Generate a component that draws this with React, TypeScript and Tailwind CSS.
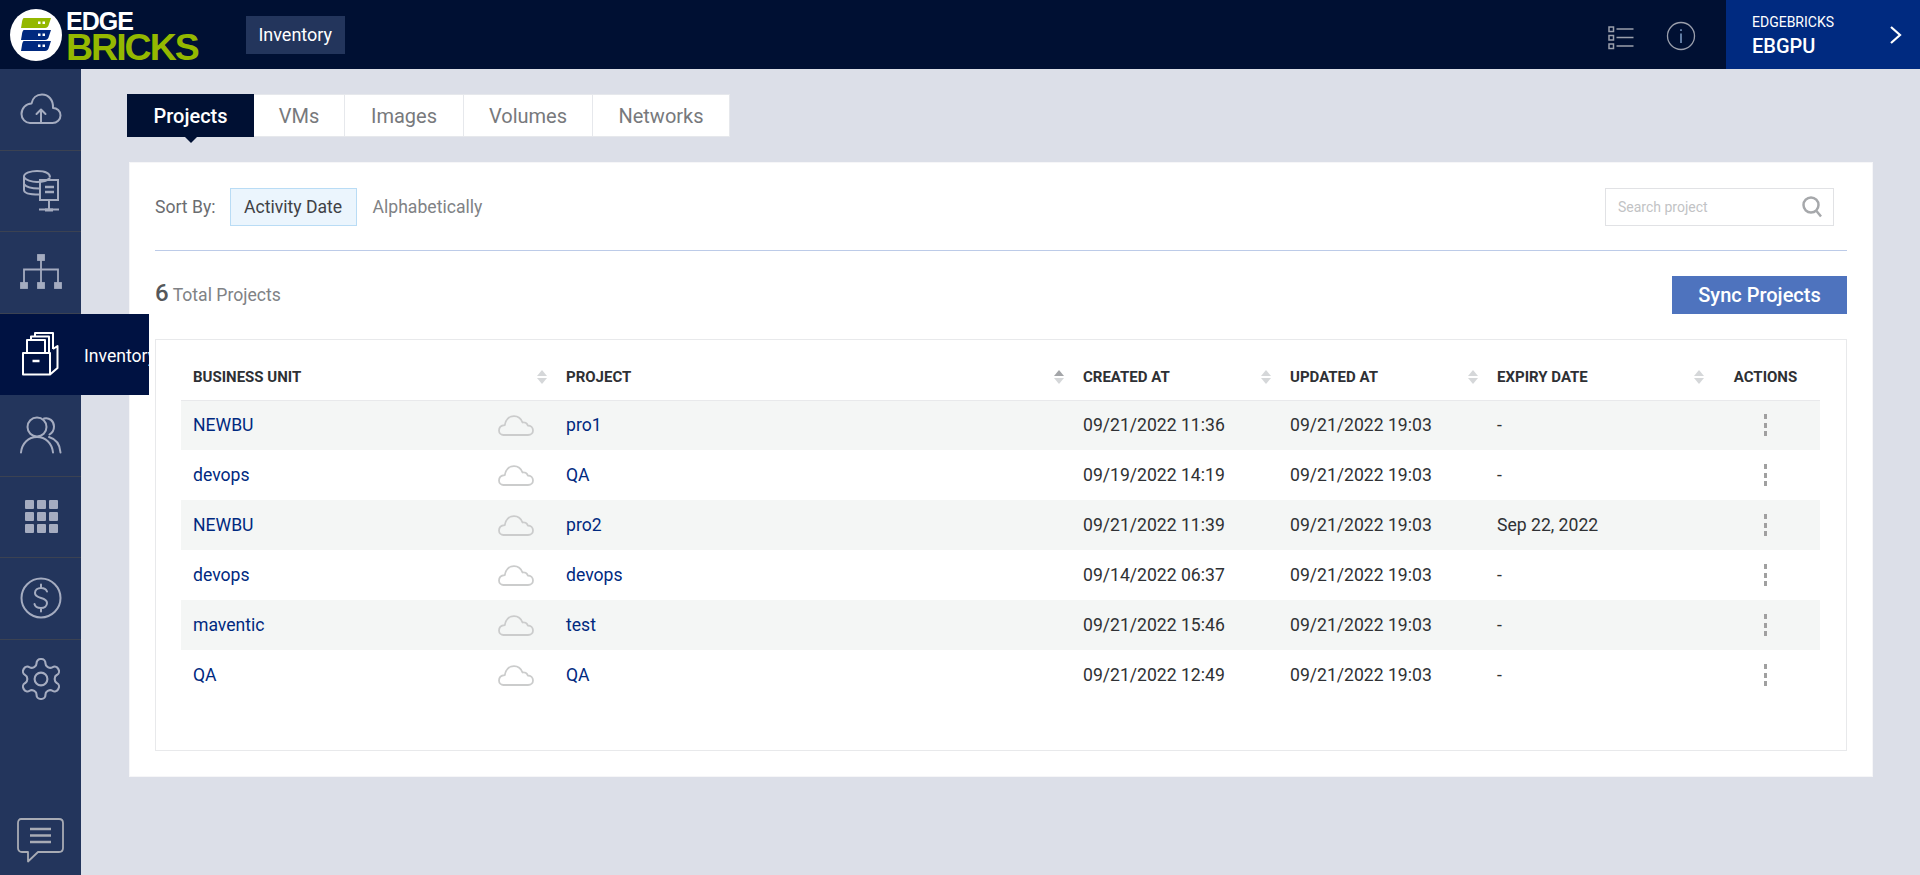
import React from "react";

const Stroke = "#a5acc0";

function CloudUp() {
  return (
    <svg width="42" height="32" viewBox="0 0 42 32" fill="none" stroke={Stroke} strokeWidth="2" strokeLinecap="round" strokeLinejoin="round">
      <path d="M10 30H32.500C37 30 40.500 26.500 40.500 22.500C40.500 18 37 15 33 15C33.500 7 28.500 1.500 22 1.500C16.500 1.500 12.500 5 11.500 10.500C6 10.500 1.500 15.500 1.500 21C1.500 26 5.500 30 10 30Z" />
      <path d="M21 30V17M16.500 21L21 16.500L25.500 21" />
    </svg>
  );
}
function ServerDoc() {
  return (
    <svg width="36" height="42" viewBox="0 0 36 42" fill="none" stroke={Stroke} strokeWidth="2">
      <path d="M16 24.500C7 24.500 1 23 1 20V6.500C1 3 8 1 14 1C21 1 27 3 27 7.500" />
      <path d="M1 7C2 10 9 12 14 12C19 12 24 11 27 8" />
      <path d="M1 14C3 17 9 18.500 16 18.500" />
      <rect x="17" y="10" width="18" height="20" />
      <path d="M22 17H31M22 22H31" strokeWidth="2.500" />
      <path d="M26 30V39M16 39.500H36" />
      <path d="M22 40H30" strokeWidth="3" />
    </svg>
  );
}
function Hierarchy() {
  return (
    <svg width="42" height="36" viewBox="0 0 42 36" fill="none" stroke={Stroke} strokeWidth="1.800">
      <rect x="18" y="1" width="6" height="5" fill="#a5acc0" />
      <path d="M21 6V29M4 29V15.500H38V29" />
      <rect x="1" y="29" width="6" height="5" fill="#a5acc0" />
      <rect x="18" y="29" width="6" height="5" fill="#a5acc0" />
      <rect x="35" y="29" width="6" height="5" fill="#a5acc0" />
    </svg>
  );
}
function InventoryBox() {
  return (
    <svg width="37" height="44" viewBox="0 0 37 44" fill="none" stroke="#fff" strokeWidth="2" strokeLinejoin="round">
      <path d="M1 21V42.500H28V21H1Z" />
      <path d="M28 42.500L35.500 36V14L31 17" />
      <path d="M5 21V8H23V21" />
      <path d="M9 8V4.500H27V21" />
      <path d="M13 4.500V1H31V17" />
      <path d="M10.500 29H17.500" strokeWidth="2.500" />
    </svg>
  );
}
function Users() {
  return (
    <svg width="42" height="38" viewBox="0 0 42 38" fill="none" stroke={Stroke} strokeWidth="2" strokeLinecap="round">
      <circle cx="17" cy="11" r="9.500" />
      <path d="M1 36.500C2 27 8.500 21 17 21C25.500 21 32 27 33 36.500" />
      <path d="M24 2.500C29 1 34 5 34 10.500C34 14 32 17 29.500 18.500" />
      <path d="M29 21C36 23 40 29 40.500 36.500" />
    </svg>
  );
}
function Grid3() {
  return (
    <div className="grid w-[34px] translate-x-[1px] grid-cols-3 gap-[3px]">
      {Array.from({ length: 9 }).map((_, i) => (
        <div key={i} className="h-[9px] w-[9px] rounded-[1px] bg-[#a5acc0]" />
      ))}
    </div>
  );
}
function Dollar() {
  return (
    <svg width="42" height="42" viewBox="0 0 42 42" fill="none" stroke={Stroke} strokeWidth="2" strokeLinecap="round">
      <circle cx="21" cy="21" r="19.500" />
      <path d="M27 14.500C26 12 24 11 21 11C17.500 11 15 13 15 16C15 19 17.500 20 21 21C24.500 22 27 23.500 27 26C27 29 24.500 31 21 31C17.500 31 15 29.500 14.500 27M21 7.500V11M21 31V34.500" />
    </svg>
  );
}
function Gear() {
  return (
    <svg width="48" height="48" viewBox="0 0 24 24" fill="none" stroke={Stroke} strokeWidth="1.050" strokeLinejoin="round" className="-translate-y-[1px]">
      <path d="M12.220 2h-.44a2 2 0 0 0-2 2v.18a2 2 0 0 1-1 1.730l-.43.250a2 2 0 0 1-2 0l-.150-.080a2 2 0 0 0-2.730.730l-.220.380a2 2 0 0 0 .730 2.730l.150.100a2 2 0 0 1 1 1.720v.51a2 2 0 0 1-1 1.740l-.150.090a2 2 0 0 0-.730 2.730l.220.380a2 2 0 0 0 2.730.730l.150-.080a2 2 0 0 1 2 0l.430.250a2 2 0 0 1 1 1.730V20a2 2 0 0 0 2 2h.44a2 2 0 0 0 2-2v-.18a2 2 0 0 1 1-1.730l.430-.250a2 2 0 0 1 2 0l.150.080a2 2 0 0 0 2.730-.730l.220-.390a2 2 0 0 0-.730-2.730l-.150-.080a2 2 0 0 1-1-1.740v-.5a2 2 0 0 1 1-1.740l.150-.090a2 2 0 0 0 .730-2.730l-.220-.380a2 2 0 0 0-2.730-.730l-.150.080a2 2 0 0 1-2 0l-.430-.250a2 2 0 0 1-1-1.730V4a2 2 0 0 0-2-2z" />
      <circle cx="12" cy="12" r="3.200" />
    </svg>
  );
}
function Chat() {
  return (
    <svg width="47" height="45" viewBox="0 0 47 45" fill="none" stroke="#a8abb4" strokeWidth="1.800" strokeLinejoin="round">
      <path d="M4 1H42C44.500 1 46 2.500 46 5V30C46 32.500 44.500 34 42 34H21L11 43.500V34H5C2.500 34 1 32.500 1 30V5C1 2.500 2.500 1 4 1Z" />
      <path d="M13 11H34M13 17.500H34M13 24H34" strokeWidth="2.600" />
    </svg>
  );
}
function Cloud() {
  return (
    <svg width="36" height="21" viewBox="0 0 36 21" fill="none" stroke="#cbcccc" strokeWidth="1.800" strokeLinejoin="round">
      <path d="M5.500 20H30C33 20 35 18 35 15.500C35 12.500 32.800 10.500 29.800 10.500C29 8 26.500 6.800 24.500 7.500C23 3.500 20 1.200 16 1.200C11 1.200 7.500 5 6.800 10.200C3.500 10.500 1 12.500 1 15.500C1 18 3 20 5.500 20Z" />
    </svg>
  );
}
function SortArrows({ active = false }: { active?: boolean }) {
  return (
    <span className="flex flex-col items-center gap-[2px]">
      <span className={`h-0 w-0 border-x-[5.500px] border-b-[6px] border-x-transparent ${active ? "border-b-[#a3a5a8]" : "border-b-[#d5d7d9]"}`} />
      <span className="h-0 w-0 border-x-[5.500px] border-t-[6px] border-x-transparent border-t-[#d5d7d9]" />
    </span>
  );
}
function Kebab() {
  return (
    <div className="flex flex-col items-center gap-[3.500px]">
      <span className="h-[5px] w-[3.500px] bg-[#a0a0a0]" />
      <span className="h-[5px] w-[3.500px] bg-[#a0a0a0]" />
      <span className="h-[5px] w-[3.500px] bg-[#a0a0a0]" />
    </div>
  );
}
function Logo() {
  return (
    <div className="flex items-center">
      <div className="ml-[10px] flex h-[52px] w-[52px] flex-col items-center justify-center gap-[1.500px] rounded-full bg-white">
        {["#94b800", "#00297f", "#00297f"].map((c, i) => (
          <svg key={i} width="30" height="10" viewBox="0 0 30 10">
            <path d="M3 0H30L28 6C27.500 8.500 26 10 24 10H0L1 4C1.300 2 2 0 3 0Z" fill={c} />
            <rect x="17" y="3.500" width="2.500" height="2.500" fill="#fff" />
            <rect x="21.500" y="3.500" width="2.500" height="2.500" fill="#fff" />
          </svg>
        ))}
      </div>
      <div className="ml-[4px] flex flex-col font-['Liberation_Sans',sans-serif] font-bold">
        <span className="mt-[4px] h-[22px] text-[25px] leading-[22px] tracking-[-1px] text-white">EDGE</span>
        <span className="h-[31px] text-[37.500px] leading-[31px] tracking-[-2px] text-[#94b800]">BRICKS</span>
      </div>
    </div>
  );
}

const navIcons = [
  <CloudUp />,
  <ServerDoc />,
  <Hierarchy />,
  <InventoryBox />,
  <Users />,
  <Grid3 />,
  <Dollar />,
  <Gear />,
];

const rows = [
  ["NEWBU", "pro1", "09/21/2022 11:36", "09/21/2022 19:03", "-"],
  ["devops", "QA", "09/19/2022 14:19", "09/21/2022 19:03", "-"],
  ["NEWBU", "pro2", "09/21/2022 11:39", "09/21/2022 19:03", "Sep 22, 2022"],
  ["devops", "devops", "09/14/2022 06:37", "09/21/2022 19:03", "-"],
  ["maventic", "test", "09/21/2022 15:46", "09/21/2022 19:03", "-"],
  ["QA", "QA", "09/21/2022 12:49", "09/21/2022 19:03", "-"],
];

const tabs = [
  ["Projects", "w-[127px]"],
  ["VMs", "w-[91px]"],
  ["Images", "w-[119px]"],
  ["Volumes", "w-[129px]"],
  ["Networks", "w-[137px]"],
];

function Th({ label, active = false, colSpan }: { label: string; active?: boolean; colSpan?: number }) {
  return (
    <th colSpan={colSpan} className="px-0 pt-[14px] text-left align-middle font-normal">
      <div className="flex items-center justify-between pl-[12px] pr-[7px]">
        <span className="text-[15px] font-bold text-[#2e3034]">{label}</span>
        <SortArrows active={active} />
      </div>
    </th>
  );
}

export default function App() {
  return (
    <div className="flex h-screen min-h-[875px] flex-col overflow-hidden bg-[#dcdfe8] font-['Roboto',sans-serif]">
      <header className="flex h-[69px] shrink-0 items-center bg-[#001033]">
        <Logo />
        <div className="ml-[48px] flex h-[38px] w-[99px] items-center justify-center bg-[#23355c] text-[18px] text-white">Inventory</div>
        <div className="ml-auto flex h-full items-center">
          <svg width="26" height="26" viewBox="0 0 26 26" fill="none" stroke="#9a9fac" strokeWidth="1.500" className="mr-[32px] mt-[6px]">
            <rect x="1" y="2" width="4.500" height="4.500" />
            <rect x="1" y="10.500" width="4.500" height="4.500" />
            <rect x="1" y="19" width="4.500" height="4.500" />
            <path d="M8.500 4H25.500M8.500 12.500H25.500M8.500 21H25.500" />
          </svg>
          <svg width="30" height="30" viewBox="0 0 30 30" fill="none" stroke="#9a9fac" strokeWidth="1.300" className="mr-[30px] mt-[3px]">
            <circle cx="15" cy="15" r="13.500" />
            <path d="M15 12.500V22" stroke="#7f9fc9" strokeWidth="1.500" />
            <path d="M15 8.200V10" stroke="#7f9fc9" strokeWidth="1.500" />
          </svg>
          <div className="flex h-full w-[194px] items-center justify-between bg-[#002a80] pl-[26px] pr-[18px] text-white">
            <div className="mt-[3px] flex flex-col">
              <span className="text-[14px] leading-[17px]">EDGEBRICKS</span>
              <span className="mt-[3px] text-[20px] font-medium leading-[24px]">EBGPU</span>
            </div>
            <svg width="13" height="20" viewBox="0 0 13 20" fill="none" stroke="#fff" strokeWidth="2.200">
              <path d="M2 2L11 10L2 18" />
            </svg>
          </div>
        </div>
      </header>

      <div className="flex min-h-0 flex-1">
        <aside className="relative z-10 flex w-[81px] shrink-0 flex-col bg-[#23355c]">
          {navIcons.map((ic, i) => (
            <div
              key={i}
              className={`relative flex h-[81.500px] shrink-0 items-center justify-center ${i === 3 ? "bg-[#001242]" : i === 7 ? "" : "border-b border-[#3b4252]"}`}
            >
              {ic}
              {i === 3 && (
                <div className="absolute left-[81px] top-0 flex h-full w-[68px] items-center overflow-hidden whitespace-nowrap bg-[#001242] pl-[3px] pt-[3px] text-[17.600px] text-white">
                  Inventory
                </div>
              )}
            </div>
          ))}
          <div className="mt-auto flex justify-center pb-[12px] pr-[1px]">
            <Chat />
          </div>
        </aside>

        <main className="min-w-0 flex-1 pl-[46px] pr-[47px] pt-[25px]">
          <nav className="relative flex h-[43px] bg-transparent">
            {tabs.map(([t, w], i) => (
              <div
                key={t}
                className={`relative flex ${w} items-center justify-center text-[20px] ${
                  i === 0 ? "bg-[#001033] font-medium text-white" : "border-y border-r border-[#e6e8ec] bg-white text-[#77797c]"
                }`}
              >
                {t}
                {i === 0 && (
                  <span className="absolute left-1/2 top-full h-0 w-0 -translate-x-1/2 border-x-[6px] border-t-[6px] border-x-transparent border-t-[#001033]" />
                )}
              </div>
            ))}
          </nav>

          <section className="ml-[2px] mt-[25px] h-[615px] border border-[#f6f6f8] bg-white px-[25px] pt-[25px]">
            <div className="flex h-[38px] items-center">
              <span className="text-[17.600px] text-[#6b6d70]">Sort By:</span>
              <span className="ml-[14px] flex h-[38px] w-[127px] items-center justify-center border border-[#b9dcf5] bg-[#ebf5fd] text-[17.600px] text-[#3f4145]">
                Activity Date
              </span>
              <span className="ml-[16px] text-[17.600px] text-[#808285]">Alphabetically</span>
              <div className="ml-auto mr-[13px] flex h-[38px] w-[229px] items-center justify-between border border-[#e1e2e5] pl-[12px] pr-[10px]">
                <span className="text-[14px] text-[#c2c3c5]">Search project</span>
                <svg width="22" height="24" viewBox="0 0 22 24" fill="none" stroke="#a6a8ab" strokeWidth="2.500">
                  <circle cx="10" cy="10" r="7.500" />
                  <path d="M15.500 16L20 21.500" />
                </svg>
              </div>
            </div>
            <div className="mt-[24px] border-t border-[#bccbe8]" />
            <div className="mt-[25px] flex h-[38px] items-center justify-between">
              <div className="-mt-[4px] flex items-baseline">
                <span className="text-[24px] font-medium text-[#55575a]">6</span>
                <span className="ml-[4px] text-[17.600px] text-[#808285]">Total Projects</span>
              </div>
              <button className="flex h-[38px] w-[175px] items-center justify-center bg-[#4e73be] text-[20px] font-medium text-white">
                Sync Projects
              </button>
            </div>
            <div className="mt-[25px] h-[412px] border border-[#e8e9eb] pl-[25px] pr-[26px]">
              <table className="w-full table-fixed border-collapse">
                <colgroup>
                  <col className="w-[317px]" />
                  <col className="w-[56px]" />
                  <col className="w-[517px]" />
                  <col className="w-[207px]" />
                  <col className="w-[207px]" />
                  <col className="w-[226px]" />
                  <col />
                </colgroup>
                <thead>
                  <tr className="h-[60px] border-b border-[#e8e9eb]">
                    <Th label="BUSINESS UNIT" colSpan={2} />
                    <Th label="PROJECT" active />
                    <Th label="CREATED AT" />
                    <Th label="UPDATED AT" />
                    <Th label="EXPIRY DATE" />
                    <th className="pt-[14px] text-center text-[15px] font-bold text-[#2e3034]">ACTIONS</th>
                  </tr>
                </thead>
                <tbody>
                  {rows.map((r, i) => (
                    <tr key={i} className={`h-[50px] text-[17.600px] ${i % 2 === 0 ? "bg-[#f4f6f5]" : "bg-white"}`}>
                      <td className="pl-[12px] text-[#00297f]">{r[0]}</td>
                      <td>
                        <Cloud />
                      </td>
                      <td className="pl-[12px] text-[#00297f]">{r[1]}</td>
                      <td className="pl-[12px] text-[#2f3134]">{r[2]}</td>
                      <td className="pl-[12px] text-[#2f3134]">{r[3]}</td>
                      <td className="pl-[12px] text-[#2f3134]">{r[4]}</td>
                      <td>
                        <Kebab />
                      </td>
                    </tr>
                  ))}
                </tbody>
              </table>
            </div>
          </section>
        </main>
      </div>
    </div>
  );
}
